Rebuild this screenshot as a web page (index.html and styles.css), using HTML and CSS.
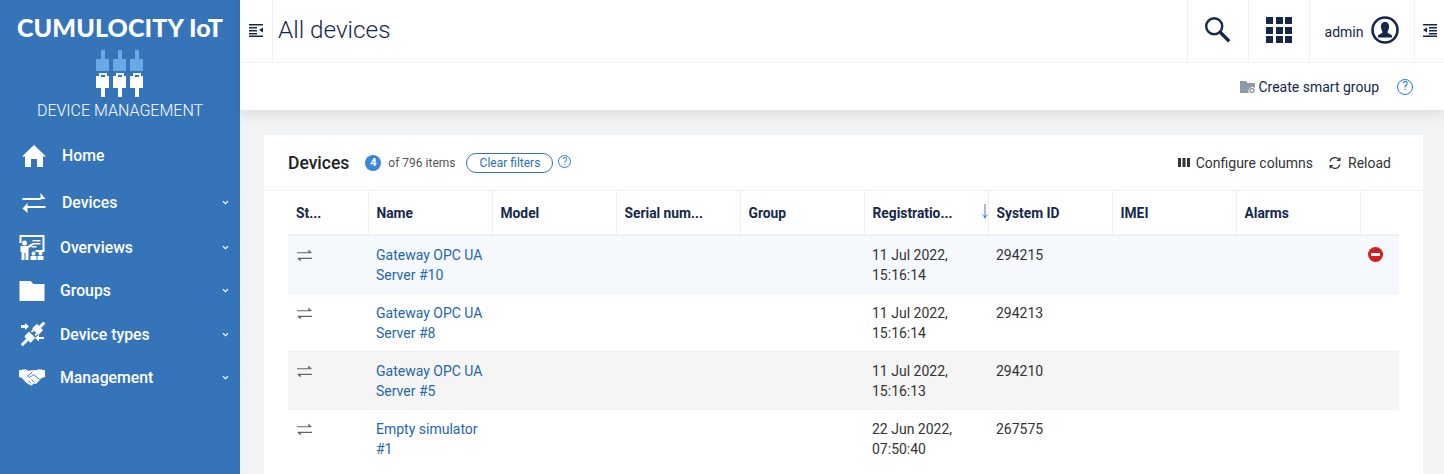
FILE: index.html
```html
<!DOCTYPE html>
<html lang="en">

<head>
    <meta charset="UTF-8">
    <meta name="viewport" content="width=device-width, initial-scale=1.0">
    <title>All devices</title>
    <link rel="stylesheet" href="styles.css">
</head>

<body>
    <div class="app">
        <aside class="sidebar">
            <div class="brand">CUMULOCITY IoT</div>
            <svg class="app-logo" width="48" height="47" viewBox="0 0 48 47">
                <g fill="#6aa9e6">
                    <path d="M5 0h4v9h4v12H0V9h5z"/>
                    <path d="M22 0h4v9h4v12H17V9h5z"/>
                    <path d="M39 0h4v9h4v12H34V9h5z"/>
                </g>
                <g fill="#fff" fill-rule="evenodd">
                    <path d="M3 23h8v3h2v12H9v9H5v-9H0V26h3zM5 25v2h4v-2z"/>
                    <path d="M20 23h8v3h2v12h-4v9h-4v-9h-5V26h3zM22 25v2h4v-2z"/>
                    <path d="M37 23h8v3h2v12h-4v9h-4v-9h-5V26h3zM39 25v2h4v-2z"/>
                </g>
            </svg>
            <div class="app-name">DEVICE MANAGEMENT</div>
            <nav class="nav">
                <a class="nav-item nav-home">
                    <svg class="nav-icon" width="24" height="22" viewBox="0 0 24 22"><path fill="#fff" d="M12 0l12 11.500h-3V22h-6v-8H9v8H3V11.500H0z"/></svg>
                    <span>Home</span>
                </a>
                <a class="nav-item nav-devices">
                    <svg class="nav-icon" width="23" height="20" viewBox="0 0 23 20"><path fill="#fff" d="M0 5h18V0l5 6-5 .2V7H0zM23 13H5v-3l-5 5.500L5 20v-5h18z"/></svg>
                    <span>Devices</span>
                    <svg class="chevron" width="7" height="5" viewBox="0 0 8 6"><path fill="none" stroke="#fff" stroke-width="1.300" d="M1 1.500l3 3 3-3"/></svg>
                </a>
                <a class="nav-item nav-overviews">
                    <svg class="nav-icon" width="25" height="25" viewBox="0 0 25 25">
                        <path fill="#fff" d="M0 0h25v17h-9v-2h7V2H2v6H0z"/>
                        <path fill="#fff" d="M13 5h8v1.500h-8zM13 8h8v1.500h-8zM12 11h5v1.500h-5z"/>
                        <circle cx="5" cy="8" r="2.500" fill="#fff"/>
                        <path fill="#fff" d="M1 11h7l5-3 1 1.500-5 4V25H6v-7H5v7H2v-8H1z"/>
                        <circle cx="14" cy="18.500" r="2" fill="#fff"/><circle cx="21" cy="18.500" r="2" fill="#fff"/>
                        <path fill="#fff" d="M11 21h6v4h-6zM18 21h6v4h-6z"/>
                    </svg>
                    <span>Overviews</span>
                    <svg class="chevron" width="7" height="5" viewBox="0 0 8 6"><path fill="none" stroke="#fff" stroke-width="1.300" d="M1 1.500l3 3 3-3"/></svg>
                </a>
                <a class="nav-item">
                    <svg class="nav-icon" width="25" height="20" viewBox="0 0 25 20"><path fill="#fff" d="M0 0h11l3 3h11v17H0z"/></svg>
                    <span>Groups</span>
                    <svg class="chevron" width="7" height="5" viewBox="0 0 8 6"><path fill="none" stroke="#fff" stroke-width="1.300" d="M1 1.500l3 3 3-3"/></svg>
                </a>
                <a class="nav-item nav-types">
                    <svg class="nav-icon" width="24" height="24" viewBox="0 0 24 24">
                        <g fill="#fff" transform="rotate(45 12 12)">
                            <rect x="10.500" y="-4" width="3" height="6"/>
                            <rect x="7.500" y="2" width="9" height="7" rx="1"/>
                            <rect x="8.500" y="9" width="2" height="2.500"/>
                            <rect x="13.500" y="9" width="2" height="2.500"/>
                            <rect x="7.500" y="13" width="9" height="7" rx="1"/>
                            <rect x="10.500" y="20" width="3" height="8"/>
                        </g>
                        <path fill="#fff" d="M0 3h4V1l4 3.500L4 8V6H0zM23 17h-5v2.500L14 16l4-3.500V15h5z"/>
                    </svg>
                    <span>Device types</span>
                    <svg class="chevron" width="7" height="5" viewBox="0 0 8 6"><path fill="none" stroke="#fff" stroke-width="1.300" d="M1 1.500l3 3 3-3"/></svg>
                </a>
                <a class="nav-item">
                    <svg class="nav-icon" width="27" height="17" viewBox="0 0 27 17">
                        <path fill="#fff" d="M0 1l6-1 4 1.500L13.500 1H17l4-1 6 1v7l-3.500 1L18 15h-3l-2 2-3-1.500-3-2L3 9 0 8z"/>
                        <path fill="none" stroke="#3674b9" d="M14 2.500L9 7l2 1.500 4-3 6.500 5M10 12l2.500 2.500M13 10.500l3 3"/>
                    </svg>
                    <span>Management</span>
                    <svg class="chevron" width="7" height="5" viewBox="0 0 8 6"><path fill="none" stroke="#fff" stroke-width="1.300" d="M1 1.500l3 3 3-3"/></svg>
                </a>
            </nav>
        </aside>

        <main class="main">
            <div class="top-wrap">
                <header class="topbar">
                    <div class="top-cell toggle-left">
                        <svg width="14" height="14" viewBox="0 0 14 14"><path fill="#14284b" d="M0 1h14v1.500H0zM0 4h8v1.500H0zM0 7h8v1.500H0zM0 10h8v1.500H0zM0 12.500h14V14H0zM14 4.500v5L10 7z"/></svg>
                    </div>
                    <h1 class="page-title">All devices</h1>
                    <div class="top-cell search-cell">
                        <svg width="26" height="26" viewBox="1.800 1.800 26 26"><circle cx="11" cy="11" r="8" fill="none" stroke="#14284b" stroke-width="2.400"/><path stroke="#14284b" stroke-width="3.400" d="M17 17l9 9"/></svg>
                    </div>
                    <div class="top-cell apps-cell">
                        <div class="apps-grid"><i></i><i></i><i></i><i></i><i></i><i></i><i></i><i></i><i></i></div>
                    </div>
                    <div class="top-cell user-cell">
                        <span class="user-name">admin</span>
                        <svg width="28" height="28" viewBox="0 0 28 28"><circle cx="14" cy="14" r="12.500" fill="none" stroke="#14284b" stroke-width="2.600"/><path fill="#14284b" d="M14 6c3 0 4.500 2.500 4 5.500-.3 2-1.200 3.500-1.500 4.500 0 1.500 3 2 4.500 3.500v2H7v-2c1.500-1.500 4.500-2 4.500-3.500-.3-1-1.200-2.500-1.500-4.500C9.500 8.500 11 6 14 6z"/></svg>
                    </div>
                    <div class="top-cell toggle-right">
                        <svg width="14" height="14" viewBox="0 0 14 14"><path fill="#14284b" d="M0 1h14v1.500H0zM6 4h8v1.500H6zM6 7h8v1.500H6zM6 10h8v1.500H6zM0 12.500h14V14H0zM0 7l4-2.500v5z"/></svg>
                    </div>
                </header>
                <div class="actionbar">
                    <svg width="15" height="12" viewBox="0 0 15 12"><path fill="#8d9aab" d="M0 0h6l1.500 2H15v5a4 4 0 0 0-6 5H0z"/><circle cx="12" cy="9.500" r="2" fill="none" stroke="#8d9aab" stroke-width="1.300"/></svg>
                    <span class="create-group">Create smart group</span>
                    <span class="help help-lg">?</span>
                </div>
            </div>

            <section class="card">
                <div class="card-head">
                    <h2>Devices</h2>
                    <span class="count">4</span>
                    <span class="items">of 796 items</span>
                    <button class="clear-btn">Clear filters</button>
                    <span class="help help-sm">?</span>
                    <div class="card-actions">
                        <span class="card-action">
                            <svg width="12" height="9" viewBox="0 0 12 9"><path fill="#333" d="M0 0h3v9H0zM4.500 0h3v9h-3zM9 0h3v9H9z"/></svg>
                            Configure columns
                        </span>
                        <span class="card-action">
                            <svg width="14" height="14" viewBox="0 0 14 14"><path fill="none" stroke="#333" stroke-width="1.200" d="M2 5.500A5.300 5.300 0 0 1 11.500 4M12 8.500A5.300 5.300 0 0 1 2.500 10"/><path fill="#333" d="M12.500 1v4h-4zM1.500 13V9h4z"/></svg>
                            Reload
                        </span>
                    </div>
                </div>
                <table class="devices">
                    <thead>
                        <tr>
                            <th class="col-status">St...</th>
                            <th>Name</th>
                            <th>Model</th>
                            <th>Serial num...</th>
                            <th>Group</th>
                            <th class="sorted">Registratio...
                                <svg class="sort-arrow" width="6" height="15" viewBox="0 0 6 15"><path fill="#3d82cc" d="M2.500 0h1v12L6 9.500 3 15 0 9.500 2.500 12z"/></svg>
                            </th>
                            <th>System ID</th>
                            <th>IMEI</th>
                            <th>Alarms</th>
                            <th class="col-last"></th>
                        </tr>
                    </thead>
                    <tbody>
                        <tr class="row-active">
                            <td class="col-status"><svg class="status" width="15" height="13" viewBox="0 0 16 13"><path fill="none" stroke="#666" stroke-width="1.200" d="M0 3.500h15M1 9.500h15"/><path fill="#666" d="M12 0l4 3.500h-4zM4 13L0 9.500h4z"/></svg></td>
                            <td><a>Gateway OPC UA Server #10</a></td>
                            <td></td><td></td><td></td>
                            <td>11 Jul 2022, 15:16:14</td>
                            <td>294215</td>
                            <td></td><td></td>
                            <td class="col-last"><span class="alarm"></span></td>
                        </tr>
                        <tr>
                            <td class="col-status"><svg class="status" width="15" height="13" viewBox="0 0 16 13"><path fill="none" stroke="#666" stroke-width="1.200" d="M0 3.500h15M1 9.500h15"/><path fill="#666" d="M12 0l4 3.500h-4zM4 13L0 9.500h4z"/></svg></td>
                            <td><a>Gateway OPC UA Server #8</a></td>
                            <td></td><td></td><td></td>
                            <td>11 Jul 2022, 15:16:14</td>
                            <td>294213</td>
                            <td></td><td></td><td class="col-last"></td>
                        </tr>
                        <tr class="row-alt">
                            <td class="col-status"><svg class="status" width="15" height="13" viewBox="0 0 16 13"><path fill="none" stroke="#666" stroke-width="1.200" d="M0 3.500h15M1 9.500h15"/><path fill="#666" d="M12 0l4 3.500h-4zM4 13L0 9.500h4z"/></svg></td>
                            <td><a>Gateway OPC UA Server #5</a></td>
                            <td></td><td></td><td></td>
                            <td>11 Jul 2022, 15:16:13</td>
                            <td>294210</td>
                            <td></td><td></td><td class="col-last"></td>
                        </tr>
                        <tr class="row-end">
                            <td class="col-status"><svg class="status" width="15" height="13" viewBox="0 0 16 13"><path fill="none" stroke="#666" stroke-width="1.200" d="M0 3.500h15M1 9.500h15"/><path fill="#666" d="M12 0l4 3.500h-4zM4 13L0 9.500h4z"/></svg></td>
                            <td><a>Empty simulator #1</a></td>
                            <td></td><td></td><td></td>
                            <td>22 Jun 2022, 07:50:40</td>
                            <td>267575</td>
                            <td></td><td></td><td class="col-last"></td>
                        </tr>
                    </tbody>
                </table>
            </section>
        </main>
    </div>
</body>

</html>
```

FILE: styles.css
```css
html,
body {
    height: 100%;
}

body {
    font-family: Roboto, "Liberation Sans", sans-serif;
    margin: 0;
    padding: 0;
    overflow: hidden;
    background-color: #f2f3f4;
    color: #333;
}

.app {
    display: flex;
    height: 474px;
    overflow: hidden;
}

/* sidebar */
.sidebar {
    width: 240px;
    flex-shrink: 0;
    background-color: #3674b9;
    color: #fff;
    display: flex;
    flex-direction: column;
    align-items: center;
}

.brand {
    font-family: Lato, "Open Sans", sans-serif;
    font-weight: 900;
    font-size: 25px;
    line-height: 30px;
    margin-top: 12px;
    letter-spacing: 0.1px;
    white-space: nowrap;
}

.app-logo {
    margin-top: 8px;
}

.app-name {
    font-size: 16px;
    font-weight: 300;
    line-height: 20px;
    margin-top: 4px;
}

.nav {
    width: 100%;
    margin-top: 11px;
}

.nav-item {
    display: flex;
    align-items: center;
    height: 43.330px;
    padding: 0 11px 0 19px;
    font-size: 15.800px;
    font-weight: 500;
    color: #fff;
}

.nav-icon {
    width: 26px;
    flex-shrink: 0;
    margin-right: 15px;
}

.nav-home,
.nav-devices {
    height: 47px;
}

.nav-home .nav-icon {
    margin-left: 2px;
    margin-right: 15px;
}

.nav-devices .nav-icon {
    margin-left: 2px;
    margin-right: 15px;
}

.nav-types .nav-icon {
    margin-left: 2px;
    margin-right: 15px;
    width: 24px;
}

.chevron {
    margin-left: auto;
}

/* top bars */
.main {
    flex: 1;
    min-width: 0;
}

.top-wrap {
    background-color: #fff;
    box-shadow: 0 2px 14px rgba(0, 0, 0, 0.12);
    position: relative;
}

.topbar {
    display: flex;
    height: 62px;
    border-bottom: 1px solid #f0f0f0;
    color: #14284b;
}

.top-cell {
    display: flex;
    align-items: center;
    justify-content: center;
    padding-bottom: 2px;
    box-sizing: border-box;
    border-left: 1px solid #f0f0f0;
}

.toggle-left {
    width: 33px;
    border-left: 0;
    border-right: 1px solid #f0f0f0;
}

.page-title {
    flex: 1;
    margin: 0;
    padding-left: 5px;
    font-size: 24.300px;
    font-weight: 300;
    line-height: 60px;
    color: #14284b;
}

.search-cell {
    width: 61px;
}

.apps-cell {
    width: 61px;
}

.apps-grid {
    display: grid;
    grid-template-columns: repeat(3, 7px);
    grid-auto-rows: 7px;
    gap: 2.500px;
}

.apps-grid i {
    background-color: #14284b;
}

.user-cell {
    width: 105px;
    gap: 8px;
    font-size: 14px;
}

.user-name {
    margin-top: 4px;
}

.toggle-right {
    width: 30px;
}

.actionbar {
    display: flex;
    align-items: center;
    justify-content: flex-end;
    height: 47px;
    padding-right: 31px;
    font-size: 14px;
    color: #14284b;
}

.create-group {
    margin-left: 3px;
}

.help {
    display: inline-block;
    border: 1.500px solid #1f7fdc;
    border-radius: 50%;
    color: #1f7fdc;
    text-align: center;
    box-sizing: border-box;
}

.help-lg {
    width: 16px;
    height: 16px;
    line-height: 13px;
    font-size: 12px;
    margin-left: 18px;
}

.help-sm {
    width: 13px;
    height: 13px;
    line-height: 11px;
    font-size: 10px;
    border-width: 1px;
    margin-left: 5px;
    margin-top: -3px;
}

/* devices card */
.card {
    margin: 25px 21px 0 24px;
    background-color: #fff;
    height: 400px;
}

.card-head {
    display: flex;
    align-items: center;
    height: 55px;
    padding: 0 32px 0 24px;
    border-bottom: 1px solid #f0f0f0;
    font-size: 13px;
}

.card-head h2 {
    margin: 0;
    font-size: 17.500px;
    font-weight: 500;
    color: #222;
}

.count {
    width: 16px;
    height: 16px;
    margin-left: 16px;
    border-radius: 50%;
    background-color: #3a87d8;
    color: #fff;
    font-size: 11px;
    font-weight: 700;
    line-height: 16px;
    text-align: center;
}

.items {
    margin-left: 7px;
    font-size: 12px;
    color: #555;
}

.clear-btn {
    font-family: inherit;
    font-size: 12px;
    color: #2a6fb8;
    height: 20px;
    width: 87px;
    margin-left: 11px;
    padding: 0;
    background-color: #fff;
    border: 1px solid #3674b9;
    border-radius: 10px;
}

.card-actions {
    display: flex;
    gap: 15px;
    margin-left: auto;
}

.card-action {
    display: flex;
    align-items: center;
    gap: 6px;
    font-size: 14px;
    color: #333;
}

/* table */
.devices {
    table-layout: fixed;
    width: 1111px;
    margin-left: 24px;
    border-collapse: collapse;
    font-size: 14px;
}

.devices th {
    position: relative;
    height: 44px;
    width: 124px;
    padding: 0 8px;
    box-sizing: border-box;
    text-align: left;
    font-size: 13.800px;
    font-weight: 700;
    color: #14284b;
    border-right: 1px solid #f0f0f0;
    border-bottom: 2px solid #f0f0f0;
}

.devices th.col-status {
    width: 80px;
}

.devices th.col-last {
    width: 39px;
    border-right: 0;
}

.sort-arrow {
    position: absolute;
    right: 0;
    top: 13px;
}

.devices td {
    height: 58px;
    padding: 9px 8px 0;
    box-sizing: border-box;
    vertical-align: top;
    line-height: 20px;
    color: #333;
    border-bottom: 1px solid #f0f0f0;
}

.devices .row-end td {
    border-bottom: 0;
}

.devices a {
    color: #2566ae;
    display: block;
}

.row-active td {
    background-color: #f5f9fd;
}

.row-alt td {
    background-color: #f5f5f5;
}

.status {
    display: block;
    margin: 4px 0 0 1px;
}

.alarm {
    display: block;
    position: relative;
    width: 15px;
    height: 15px;
    margin-top: 2px;
    border-radius: 50%;
    background-color: #d3201f;
}

.alarm::after {
    content: "";
    position: absolute;
    left: 3px;
    right: 3px;
    top: 6px;
    height: 3px;
    background-color: #fff;
}
```
